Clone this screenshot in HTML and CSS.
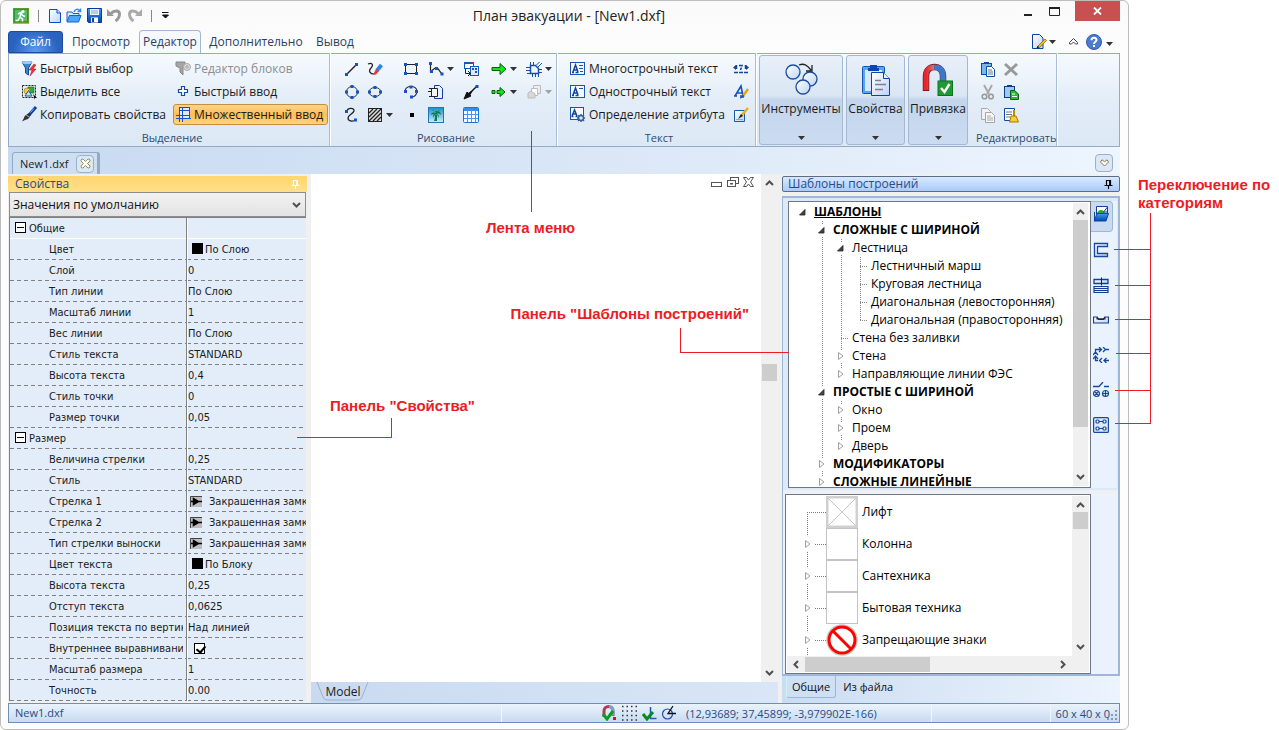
FILE: index.html
```html
<!DOCTYPE html>
<html lang="ru">
<head>
<meta charset="utf-8">
<title>План эвакуации - [New1.dxf]</title>
<link rel="stylesheet" href="styles.css">
</head>
<body>
<svg class="defs" aria-hidden="true">
  <defs>
    <linearGradient id="gBlue" x1="0" y1="0" x2="0" y2="1"><stop offset="0" stop-color="#3aa0f5"/><stop offset="1" stop-color="#0c3fa8"/></linearGradient>
    <linearGradient id="gPage" x1="0" y1="0" x2="1" y2="1"><stop offset="0" stop-color="#ffffff"/><stop offset="1" stop-color="#bcd3fa"/></linearGradient>
    <linearGradient id="gSky" x1="0" y1="0" x2="0" y2="1"><stop offset="0" stop-color="#1d8bd0"/><stop offset="1" stop-color="#c9f0fa"/></linearGradient>
    <linearGradient id="gRed" x1="0" y1="0" x2="1" y2="0"><stop offset="0" stop-color="#e8252b"/><stop offset="1" stop-color="#b8848a"/></linearGradient>
  </defs>
  <symbol id="caret" viewBox="0 0 7 4"><path d="M0 0h7L3.500 4z" fill="#333"/></symbol>
  <symbol id="up" viewBox="0 0 9 6"><path d="M1 5l3.500-3.500L8 5" fill="none" stroke="#505050" stroke-width="2"/></symbol>
  <symbol id="down" viewBox="0 0 9 6"><path d="M1 1l3.500 3.500L8 1" fill="none" stroke="#505050" stroke-width="2"/></symbol>
  <symbol id="left" viewBox="0 0 6 9"><path d="M5 1L1.500 4.500 5 8" fill="none" stroke="#505050" stroke-width="2"/></symbol>
  <symbol id="right" viewBox="0 0 6 9"><path d="M1 1l3.500 3.500L1 8" fill="none" stroke="#505050" stroke-width="2"/></symbol>
  <symbol id="open" viewBox="0 0 9 9"><path d="M7 2v5.500H1.500z" fill="#444" stroke="#222" stroke-width=".8"/></symbol>
  <symbol id="shut" viewBox="0 0 9 9"><path d="M2.500 1v7L7 4.500z" fill="#fff" stroke="#a0a0a0"/></symbol>
  <symbol id="pin" viewBox="0 0 9 9"><path d="M2.500 5V.5h4V5M.5 5.500h8M4.500 5.500V9M5.700 1v4" fill="none" stroke="currentColor" stroke-width="1.200"/></symbol>
  <symbol id="dart" viewBox="0 0 12 11"><path d="M0 0h12v11H0z" fill="#bdbdbd"/><path d="M.5 11V.5H12" fill="none" stroke="#444"/><path d="M1 5.500h11M3.500 2.500v6l5-3z" stroke="#000" stroke-width="1.500" fill="#000"/></symbol>
</svg>

<div class="stage">
<div class="window">
  <header class="titlebar">
    <div class="quick">
      <svg width="16" height="16" viewBox="0 0 16 16"><rect width="16" height="16" fill="#5f9b2a"/><rect x="1" y="1" width="14" height="13" fill="#1fa035"/><path d="M2 2h12v11H2z" fill="#fff" opacity=".25"/><circle cx="10" cy="3.500" r="1.500" fill="#fff"/><path d="M5 6l3-1.500 1.500 3L12 8.500M8 5L7 9l2.500 2v2.500M7 9l-2 3.500H2.500" stroke="#fff" stroke-width="1.500" fill="none"/><rect y="15" width="16" height="1" fill="#e0ad00"/></svg>
      <i class="bar"></i>
      <button aria-label="Создать"><svg width="12" height="14" viewBox="0 0 12 14"><path d="M.5.5h7.500l3.500 3.500v9.500H.5z" fill="url(#gPage)" stroke="#0a4fc0"/><path d="M8 .5V4h3.500" fill="#cfe2ff" stroke="#0a4fc0"/></svg></button>
      <button aria-label="Открыть"><svg width="16" height="15" viewBox="0 0 16 15"><path d="M1 13V4h5l1 1.500h6V8" fill="#d4e8ff" stroke="#0f62d0"/><path d="M1 13.500L3.500 7.500h11.500L12.500 14H1z" fill="#4ea4f7" stroke="#0f62d0"/><path d="M8 4c1-3 4-3.500 5.500-1.500M14.500.5V3.500h-3" fill="none" stroke="#2196f3" stroke-width="1.500"/></svg></button>
      <button aria-label="Сохранить"><svg width="15" height="15" viewBox="0 0 15 15"><path d="M.5.500h14v14h-13l-1-1z" fill="url(#gBlue)" stroke="#083a9c"/><rect x="3" y="1" width="9" height="6" fill="#eaf3ff"/><path d="M4 3h7M4 5h7" stroke="#8ab"/><rect x="4" y="9.500" width="7" height="5" fill="#fff"/><rect x="5" y="10" width="2" height="4" fill="#0b3fa0"/></svg></button>
      <button aria-label="Отменить"><svg width="15" height="13" viewBox="0 0 15 13"><path d="M0 0v7h7z" fill="#999"/><path d="M4 4.500C7 1 12.500 1 12.500 5c0 3-1 5-4 7" fill="none" stroke="#999" stroke-width="3"/></svg></button>
      <button aria-label="Вернуть"><svg width="15" height="13" viewBox="0 0 15 13"><path d="M15 0v7H8z" fill="#aaa"/><path d="M11 4.500C8 1 2.500 1 2.500 5c0 3 1 5 4 7" fill="none" stroke="#aaa" stroke-width="3"/></svg></button>
      <i class="bar"></i>
      <button aria-label="Настроить"><svg width="7" height="7" viewBox="0 0 7 7"><path d="M0 .5h6.500M.5 3h6L3.500 6z" stroke="#111" fill="#111"/></svg></button>
    </div>
    <h1>План эвакуации - [New1.dxf]</h1>
    <div class="sysbtns">
      <button aria-label="Свернуть"><svg width="10" height="10"><path d="M1 9h8" stroke="#222" stroke-width="2"/></svg></button>
      <button aria-label="Развернуть"><svg width="11" height="9"><path d="M.5 1v7.500h10V1" fill="none" stroke="#222"/><path d="M0 1h11" stroke="#222" stroke-width="2"/></svg></button>
      <button class="close" aria-label="Закрыть"><svg width="9" height="8" viewBox="0 0 9 8"><path d="M1 .5l7 7M8 .5l-7 7" stroke="#fff" stroke-width="1.800"/></svg></button>
    </div>
  </header>

  <nav class="tabs">
    <button class="file">Файл</button>
    <button class="t-view">Просмотр</button>
    <button class="active">Редактор</button>
    <button class="t-more">Дополнительно</button>
    <button class="t-out">Вывод</button>
    <div class="tabtools">
      <button aria-label="Стиль"><svg width="15" height="15" viewBox="0 0 15 15"><path d="M.5.500h7l3.500 3.500v10.500H.5z" fill="url(#gPage)" stroke="#0a3fa0"/><path d="M6 12l7-7 1.500 1.500-7 7z" fill="#f4c21c" stroke="#7a5a00" stroke-width=".7"/><path d="M4.500 14.200l1-2.400 1.800 1.700z" fill="#111"/></svg><svg class="caret"><use href="#caret"/></svg></button>
      <button aria-label="Свернуть ленту"><svg width="9" height="7" viewBox="0 0 9 7"><path d="M.5 4.500l4-4 4 4v1.500h-2l-2-2-2 2h-2z" fill="#fff" stroke="#444"/></svg></button>
      <button aria-label="Справка"><svg width="16" height="16" viewBox="0 0 16 16"><circle cx="8" cy="8" r="7.500" fill="#4a7bcc" stroke="#2f5ba8"/><path d="M5.500 6.200C5.500 3 10.500 3 10.500 6c0 1.800-2.500 1.800-2.500 4M8 11v2" fill="none" stroke="#fff" stroke-width="2"/></svg><svg class="caret low"><use href="#caret"/></svg></button>
    </div>
  </nav>

  <section class="ribbon">
    <div class="group select">
      <div class="cols">
        <div class="col wide">
          <button class="cmd"><svg width="17" height="17" viewBox="0 0 17 17"><path d="M1 2h10l-3.500 6v7l-3-2V8z" fill="#3a86cf" stroke="#14508f"/><ellipse cx="6" cy="2.500" rx="5" ry="1.500" fill="#9ccbf5"/><path d="M13 4L8 10h3l-2 6 6-7h-3l3-4z" fill="#f0303a" stroke="#a31a20" stroke-width=".5"/></svg>Быстрый выбор</button>
          <button class="cmd"><svg width="17" height="17" viewBox="0 0 17 17"><rect x="1.500" y="2.500" width="13" height="12" fill="none" stroke="#222" stroke-dasharray="2 1"/><rect x="7" y="4" width="6" height="6" fill="#2fae3a" stroke="#0c6a16" stroke-width=".6"/><circle cx="6" cy="8" r="3" fill="#f2d040" stroke="#927300" stroke-width=".6"/><path d="M7.500 7.500l3.500 5.500H4z" fill="#bfe0ff" stroke="#1558a8"/><path d="M12 11l4 4h-2l0 2z" fill="#000"/></svg>Выделить все</button>
          <button class="cmd"><svg width="17" height="17" viewBox="0 0 17 17"><path d="M15 1L8 9" stroke="#0f3f9c" stroke-width="3"/><path d="M13 2.500l-3.500 4" stroke="#7bb5f5"/><path d="M8 7l2 2-3 4-3 1-3 1.500L3 12c0-2 2-3 2-3z" fill="#333"/><path d="M5 9l4 2.500" stroke="#aaa"/></svg>Копировать свойства</button>
        </div>
        <div class="col">
          <button class="cmd off" disabled><svg width="17" height="17" viewBox="0 0 17 17"><path d="M1 2h9v5H8v8l-3-3V8L1 6z" fill="#a5a5a5" stroke="#888"/><circle cx="12" cy="7" r="3.500" fill="#ddd" stroke="#aaa"/><circle cx="12" cy="7" r="1.200" fill="#fff" stroke="#999"/></svg>Редактор блоков</button>
          <button class="cmd"><svg width="17" height="17" viewBox="0 0 17 17"><path d="M6.500 3.500h3v3h3v3h-3v3h-3v-3h-3v-3h3z" fill="#fff" stroke="#0b4fae" stroke-width="1.200"/></svg>Быстрый ввод</button>
          <button class="cmd on"><svg width="17" height="17" viewBox="0 0 17 17"><rect x="4" y="2" width="11" height="10" fill="#dfeaff"/><path d="M4.500 1v15M7.500 1v15M1 12.500h15M1 9.500h14M14.500 2v11M4 1.500h11M5 4.500h9" fill="none" stroke="#1553c8"/></svg>Множественный ввод</button>
        </div>
      </div>
      <h2>Выделение</h2>
    </div>

    <div class="group draw">
      <div class="tools">
        <button aria-label="Линия"><svg class="ic" viewBox="0 0 16 16"><path d="M3 13L13 3" stroke="#222" stroke-width="1.500"/><path d="M1 12h3v3H1zM11 2h3v3h-3z" fill="#1552c4"/></svg></button>
        <button aria-label="Эскиз"><svg class="ic" viewBox="0 0 16 16"><path d="M1 3c4-2 6 1 3 4s-1 6 3 6" fill="none" stroke="#222" stroke-width="1.200"/><path d="M14.500 4L10 9.500" stroke="#2a86e8" stroke-width="4"/><path d="M9 8l3 2-3 3.500-3 .5z" fill="#e83838"/></svg></button>
        <button aria-label="Прямоугольник"><svg class="ic" viewBox="0 0 16 16"><path d="M2.500 3.500h11v9h-11z" fill="#eef4fc" stroke="#222"/><path d="M1 2h3v3H1zM12 2h3v3h-3zM1 11h3v3H1zM12 11h3v3h-3z" fill="#1552c4"/></svg></button>
        <button aria-label="Полилиния"><svg class="ic" viewBox="0 0 16 16"><path d="M2.500 2.500v8l4-3c3-2 4 1 7 5" fill="none" stroke="#222" stroke-width="1.200"/><path d="M1 1h3v3H1zM2 9h3v3H2zM7 6h3v3H7zM12.500 11.500h3v3h-3z" fill="#1552c4"/></svg><svg class="caret"><use href="#caret"/></svg></button>
        <button aria-label="Блок"><svg class="ic" viewBox="0 0 16 16"><rect x="1.500" y="1.500" width="9" height="6" fill="#fff" stroke="#1558b8"/><path d="M1 2h10" stroke="#1558b8" stroke-width="2"/><path d="M9 1h2v2H9z" fill="#e02020"/><rect x="7.500" y="5.500" width="8" height="9" fill="#dceafc" stroke="#1558b8"/><path d="M9 7h2v2H9zM12 10h2v2h-2zM12 7h2v2h-2z" fill="#1552c4"/><path d="M2.500 8v4.500H7M5 10l2.500 2.500L5 15" fill="none" stroke="#222"/></svg></button>
        <button aria-label="Маршрут"><svg class="ic" viewBox="0 0 16 16"><path d="M1 6.500h8V2.500L15 8l-6 5.500V9.500H1z" fill="#13e61b" stroke="#0a5a0d"/></svg><svg class="caret"><use href="#caret"/></svg></button>
        <button aria-label="Область"><svg class="ic" viewBox="0 0 16 16"><path d="M4.500 4.500h5l3 3v5h-8z" fill="#f1f6ff" stroke="#1552a8" stroke-width="1.500"/><path d="M4.500 4V1M7.500 4V1M10.500 4l3-3M12 6l4-4M13 8.500h3M13 11.500h3M4 6.500H0M4 9.500H0M4 12.500H1M6.500 13v3M9.500 13v3M12.500 13v3" stroke="#1552a8"/></svg><svg class="caret"><use href="#caret"/></svg></button>

        <button aria-label="Окружность"><svg class="ic" viewBox="0 0 16 16"><circle cx="8" cy="8" r="5.500" fill="none" stroke="#333"/><path d="M6.500 1h3v3h-3zM6.500 12h3v3h-3zM1 6.500h3v3H1zM12 6.500h3v3h-3z" fill="#1552c4"/></svg></button>
        <button aria-label="Эллипс"><svg class="ic" viewBox="0 0 16 16"><ellipse cx="8" cy="8" rx="6" ry="4.500" fill="none" stroke="#333"/><path d="M6.500 2h3v3h-3zM6.500 11h3v3h-3zM1 6.500h3v3H1zM12 6.500h3v3h-3z" fill="#1552c4"/></svg></button>
        <button aria-label="Дуга"><svg class="ic" viewBox="0 0 16 16"><path d="M2 7c1-6 11-6 12 0 0 3-2 6-5 6" fill="none" stroke="#333" stroke-width="1.200"/><path d="M1 6h3v3H1zM6.500 1.500h3v3h-3zM12 6h3v3h-3zM7 11.500h3v3H7z" fill="#1552c4"/></svg></button>
        <button aria-label="Вставка"><svg class="ic" viewBox="0 0 16 16"><path d="M6.500 1.500h5l3 3v10h-8z" fill="#e5efff" stroke="#123f9c"/><path d="M3.500 4.500h6v8h-6z" fill="#f4f4f4" stroke="#222"/><path d="M1 4.500h8M0 7.500h4M1 12.500h8" stroke="#222"/></svg></button>
        <button aria-label="Выноска"><svg class="ic" viewBox="0 0 16 16"><path d="M14 2L5 11" stroke="#111" stroke-width="1.500"/><path d="M1 15l3-7 4 4z" fill="#111" stroke="#111"/><path d="M5 9l5-3-2.500 5z" fill="#111"/><path d="M12.500 1h3v3h-3z" fill="#1552c4"/></svg></button>
        <button aria-label="Запасной маршрут"><svg class="ic" viewBox="0 0 16 16"><path d="M1 6.500h3v3H1zM6 6.500h3V3.500L14 8l-5 4.500V9.500H6z" fill="#13e61b" stroke="#0a5a0d"/></svg><svg class="caret"><use href="#caret"/></svg></button>
        <button disabled aria-label="Порядок"><svg class="ic" viewBox="0 0 16 16"><path d="M7.500 1.500h7v8h-7z" fill="#eee" stroke="#bbb"/><path d="M5.500 4.500h6v7h-6z" fill="#fff" stroke="#bbb"/><path d="M2 14V9l3-2 4 3v4z" fill="#d8d8d8" stroke="#bbb"/></svg><svg class="caret dim"><use href="#caret"/></svg></button>

        <button aria-label="Сплайн"><svg class="ic" viewBox="0 0 16 16"><path d="M3 4c1-4 8-3 7 0S4 8 4 11s4 4 8 2" fill="none" stroke="#222" stroke-width="1.300"/><path d="M1 3h3v3H1zM10 11.500h3v3h-3z" fill="#1552c4"/></svg></button>
        <button aria-label="Штриховка"><svg class="ic" viewBox="0 0 16 16"><rect x="1.500" y="1.500" width="13" height="13" fill="#ddd" stroke="#222"/><path d="M2 6l4-4M2 10l8-8M2 14L14 2M6 14l8-8M10 14l4-4" stroke="#222" stroke-width="1.300"/></svg><svg class="caret"><use href="#caret"/></svg></button>
        <button aria-label="Точка"><svg class="ic" viewBox="0 0 16 16"><path d="M7 6h4v4H7z" fill="#000"/></svg></button>
        <button aria-label="Изображение"><svg class="ic" viewBox="0 0 16 16"><rect x=".5" y=".5" width="15" height="15" fill="url(#gSky)" stroke="#1c76b8"/><path d="M7 7c0 3 0 5-1 7h3V7M3 8c0-3 3-3 5-2 1-3 5-2 5 2-2-2-3-2-4-1 2 1 2 2 2 4C10 8 8 7 8 7S6 8 5 11c0-3 0-3 1-4-1 0-2 0-3 1zM4 4c2-1 3 0 4 2 1-3 3-3 4-2" fill="#0b7a4c"/></svg></button>
        <button aria-label="Таблица"><svg class="ic" viewBox="0 0 16 16"><rect x=".5" y=".5" width="15" height="15" rx="1" fill="#f8fcff" stroke="#1b6fd8"/><path d="M1 2.500h14" stroke="#3b8ae8" stroke-width="3"/><path d="M1 7.500h14M1 11.500h14M4.500 3v12M8.500 3v12M12.500 3v12" stroke="#4b94ea"/></svg></button>
      </div>
      <h2>Рисование</h2>
    </div>

    <div class="group text">
      <div class="cols">
        <div class="col">
          <button class="cmd"><svg width="15" height="14" viewBox="0 0 15 14"><rect x=".5" y=".5" width="14" height="12" fill="#f5f9ff" stroke="#1a55b0"/><path d="M2 10.500h2m1.500 0h3M3 10l2.500-7L8 10M4 8h3" fill="none" stroke="#12459c" stroke-width="1.500"/><path d="M9 3.500h4M9 6.500h4M10 9.500h3" stroke="#1a55b0"/></svg>Многострочный текст</button>
          <button class="cmd"><svg width="15" height="14" viewBox="0 0 15 14"><rect x=".5" y=".5" width="14" height="12" fill="#f5f9ff" stroke="#1a55b0"/><path d="M2 10.500h2m1.500 0h3M3 10l2.500-7L8 10M4 8h3" fill="none" stroke="#12459c" stroke-width="1.500"/><path d="M9 3.500h4" stroke="#1a55b0"/></svg>Однострочный текст</button>
          <button class="cmd"><svg width="15" height="15" viewBox="0 0 15 15"><rect x=".5" y=".5" width="13" height="12" fill="#f5f9ff" stroke="#1a55b0"/><path d="M2 9l2.500-6L7 9M3 7h3M1.500 9.500h2m2 0h2" fill="none" stroke="#12459c" stroke-width="1.500"/><circle cx="11" cy="11" r="2.500" fill="#d5e4fa" stroke="#3a5f96" stroke-width="1.500"/><path d="M11 7v1M11 14v1M7 11h1M14 11h1M8.300 8.300l.7.700M13 13l1 1M13 9l1-1M8 14l1-1" stroke="#3a5f96" stroke-width="1.500"/></svg>Определение атрибута</button>
        </div>
        <div class="col aside">
          <button aria-label="Размеры текста"><svg class="ic" viewBox="0 0 16 16"><path d="M0 6.500L3 4v5zM16 6.500L13 4v5z" fill="#12459c"/><path d="M3.500 4v5M6 4.500h3L7.500 9M12.500 4v5M1 11.500h14" fill="none" stroke="#12459c" stroke-width="1.500" stroke-dasharray="4 1"/></svg></button>
          <button aria-label="Стиль текста"><svg class="ic" viewBox="0 0 16 16"><path d="M1 12h3m3 0h4M2 12L8 2l2 10M4.500 9H10" fill="none" stroke="#1552b8" stroke-width="1.600"/><path d="M15 5l-5 7" stroke="#e9a414" stroke-width="2.500"/><path d="M10 11l-3 3 4-1z" fill="#1d5bc0" stroke="#1d5bc0"/></svg></button>
          <button aria-label="Правка текста"><svg class="ic" viewBox="0 0 16 16"><path d="M1.500 3.500h10v11h-10z" fill="url(#gPage)" stroke="#155aa8"/><path d="M3 12.500h7" stroke="#8ab"/><path d="M15 1L8 9" stroke="#eab020" stroke-width="2.500"/><path d="M8 7l2 2-5 3z" fill="#222"/></svg></button>
        </div>
      </div>
      <h2>Текст</h2>
    </div>

    <div class="bigs">
      <button class="big b1"><svg width="34" height="34" viewBox="0 0 34 34"><g fill="url(#gPage)" stroke="#1c4c9c" stroke-width="1.300"><circle cx="9" cy="9" r="7"/><circle cx="26" cy="16" r="7"/><circle cx="19" cy="24" r="7"/></g><path d="M15 2c5-2 8 0 12 5M28 2v6h-6" fill="none" stroke="#222" stroke-width="1.300"/></svg><span>Инструменты</span><svg class="caret"><use href="#caret"/></svg></button>
      <button class="big b2"><svg width="34" height="34" viewBox="0 0 34 34"><rect x="3.500" y="3.500" width="22" height="27" rx="1" fill="#58a6ee" stroke="#1156b4"/><path d="M6 7h17v21H6z" fill="#d7e9fc"/><path d="M9 5h2V2h7v3h2v3H9z" fill="#0a46ac"/><path d="M12.500 9.500h12l6 6v17h-18z" fill="url(#gPage)" stroke="#0b46a6"/><path d="M24.500 9.500v6h6" fill="#e6f0ff" stroke="#0b46a6"/><path d="M16 17.500h6M16 21.500h11M16 26.500h8" stroke="#7c8090" stroke-width="1.600"/></svg><span>Свойства</span><svg class="caret"><use href="#caret"/></svg></button>
      <button class="big b3"><svg width="34" height="34" viewBox="0 0 34 34"><path d="M5 28V13C5 1 22 1 22 13v6" fill="none" stroke="#8a1218" stroke-width="6.500"/><path d="M5 27V13C5 5 9 4.300 13.500 4.300" fill="none" stroke="url(#gRed)" stroke-width="5"/><path d="M13.500 4.300C18 4.300 22 6 22 13v7" fill="none" stroke="#3b78c8" stroke-width="5.500"/><rect x="17" y="18" width="14.500" height="14.500" fill="#1f9a30" stroke="#0c7420"/><path d="M20 25l3.500 4 5-8" fill="none" stroke="#fff" stroke-width="2.500"/></svg><span>Привязка</span><svg class="caret"><use href="#caret"/></svg></button>
    </div>

    <div class="group edit">
      <div class="clip">
        <button aria-label="Вставить"><svg class="ic" viewBox="0 0 16 16"><rect x="1.500" y="2.500" width="10" height="11" fill="#7ab6f0" stroke="#0b4ba8"/><path d="M4 3V1h5v2z" fill="#0b4ba8"/><path d="M6.500 5.500h5l3 3v7h-8z" fill="#fff" stroke="#0b4ba8"/><path d="M8 9h4M8 11h5M8 13h5" stroke="#678"/></svg></button>
        <button disabled aria-label="Удалить"><svg class="ic" viewBox="0 0 16 16"><path d="M2 3l12 11M14 3L2 14" stroke="#999" stroke-width="3"/></svg></button>
        <button disabled aria-label="Вырезать"><svg class="ic" viewBox="0 0 16 16"><path d="M4 1l5 9M12 1l-5 9" stroke="#aaa" stroke-width="2"/><circle cx="4.500" cy="12.500" r="2.300" fill="none" stroke="#999" stroke-width="1.600"/><circle cx="11" cy="12.500" r="2.300" fill="none" stroke="#999" stroke-width="1.600"/></svg></button>
        <button aria-label="Вставить блок"><svg class="ic" viewBox="0 0 16 16"><rect x="1.500" y="2.500" width="10" height="11" fill="#9ccaf5" stroke="#0b3c88"/><path d="M4 3V1h5v2z" fill="#0b3c88"/><path d="M7.500 6.500h4l4 3.500v5.500h-8z" fill="#32b53c" stroke="#0b6414"/><path d="M9 10h3M9 12.500h5" stroke="#fff"/></svg></button>
        <button disabled aria-label="Копировать"><svg class="ic" viewBox="0 0 16 16"><path d="M1.500 1.500h6l3 3v8h-9z" fill="#f2f2f2" stroke="#aaa"/><path d="M5.500 5.500h6l3 3v7h-9z" fill="#f7f7f7" stroke="#a5a5a5"/><path d="M7 9h4M7 11h6M7 13h6" stroke="#aaa"/></svg></button>
        <button aria-label="Очистить"><svg class="ic" viewBox="0 0 16 16"><path d="M1.500 1.500h10v12h-10z" fill="#fff" stroke="#0b4ba8"/><path d="M3 5h6M3 7.500h6M3 10h4" stroke="#678"/><path d="M11 3v6" stroke="#c08a00" stroke-width="2"/><path d="M8 9h5l2.500 6H6.500z" fill="#f6cf32" stroke="#a37a00"/></svg></button>
      </div>
      <h2>Редактировать</h2>
    </div>
  </section>

  <div class="docbar">
    <div class="doctab">New1.dxf<button aria-label="Закрыть вкладку"><svg width="11" height="11" viewBox="0 0 11 11"><path d="M1 2l1-1h1l2.500 2.500L8 1h1l1 1v1L7.500 5.500 10 8v1l-1 1H8L5.500 7.500 3 10H2L1 9V8l2.500-2.500L1 3z" fill="#fff" stroke="#8a8450" stroke-width=".9"/></svg></button></div>
    <button class="doclist" aria-label="Список документов"><svg width="9" height="8" viewBox="0 0 9 8"><path d="M.5 3L2 .8l2.500 2L7 .8 8.500 3l-4 4z" fill="#fff" stroke="#827b4a"/></svg></button>
  </div>

  <main class="body">
    <section class="props">
      <div class="phead gold"><span>Свойства</span><svg width="9" height="9"><use href="#pin"/></svg></div>
      <label class="combo"><select aria-label="Набор значений"><option>Значения по умолчанию</option></select><svg width="9" height="6"><use href="#down"/></svg></label>
      <table class="grid">
        <colgroup><col class="cname"><col></colgroup>
        <tbody>
        <tr class="cat first"><th><span class="minus"></span>Общие</th><td></td></tr>
        <tr><th>Цвет</th><td><i class="swatch"></i>По Слою</td></tr>
        <tr><th>Слой</th><td>0</td></tr>
        <tr><th>Тип линии</th><td>По Слою</td></tr>
        <tr><th>Масштаб линии</th><td>1</td></tr>
        <tr><th>Вес линии</th><td>По Слою</td></tr>
        <tr><th>Стиль текста</th><td>STANDARD</td></tr>
        <tr><th>Высота текста</th><td>0,4</td></tr>
        <tr><th>Стиль точки</th><td>0</td></tr>
        <tr><th>Размер точки</th><td>0,05</td></tr>
        <tr class="cat"><th><span class="minus"></span>Размер</th><td></td></tr>
        <tr><th>Величина стрелки</th><td>0,25</td></tr>
        <tr><th>Стиль</th><td>STANDARD</td></tr>
        <tr><th>Стрелка 1</th><td><svg class="dart"><use href="#dart"/></svg>Закрашенная замкнутая</td></tr>
        <tr><th>Стрелка 2</th><td><svg class="dart"><use href="#dart"/></svg>Закрашенная замкнутая</td></tr>
        <tr><th>Тип стрелки выноски</th><td><svg class="dart"><use href="#dart"/></svg>Закрашенная замкнутая</td></tr>
        <tr><th>Цвет текста</th><td><i class="swatch"></i>По Блоку</td></tr>
        <tr><th>Высота текста</th><td>0,25</td></tr>
        <tr><th>Отступ текста</th><td>0,0625</td></tr>
        <tr><th><span class="cut">Позиция текста по вертикали</span></th><td>Над линией</td></tr>
        <tr><th><label class="cut" for="inner">Внутреннее выравнивание</label></th><td><input id="inner" type="checkbox" checked></td></tr>
        <tr><th>Масштаб размера</th><td>1</td></tr>
        <tr><th>Точность</th><td>0.00</td></tr>
        </tbody>
      </table>
    </section>

    <section class="drawing">
      <div class="sheet">
        <div class="mdi">
          <button aria-label="Свернуть документ"><svg width="12" height="11" viewBox="0 0 12 11"><rect x=".5" y="5.500" width="10" height="4" fill="#fff" stroke="#555"/></svg></button>
          <button aria-label="Восстановить документ"><svg width="12" height="11" viewBox="0 0 12 11"><rect x="3.500" y=".5" width="8" height="6" fill="#fff" stroke="#555"/><rect x=".5" y="3.500" width="8" height="6" fill="#fff" stroke="#555"/><rect x="3" y="6" width="3" height="1.500" fill="#555"/></svg></button>
          <button aria-label="Закрыть документ"><svg width="11" height="10" viewBox="0 0 11 10"><path d="M.5.500h3l2 2.500 2-2.500h3L7.500 5l3 4.500h-3l-2-2.500-2 2.500h-3l3-4.500z" fill="#fff" stroke="#555"/></svg></button>
        </div>
        <div class="vscroll"><svg width="9" height="6"><use href="#up"/></svg><div class="track mid"><i></i></div><svg width="9" height="6"><use href="#down"/></svg></div>
      </div>
      <div class="sheets"><button><svg width="54" height="19" viewBox="0 0 54 19"><path d="M1 0l6 15q1 3 4 3h31q3 0 4-3l6-15" fill="none" stroke="#9cb0cc"/></svg><span>Model</span></button></div>
    </section>

    <aside class="templates">
      <div class="phead blue"><span>Шаблоны построений</span><svg width="9" height="9"><use href="#pin"/></svg></div>
      <div class="tframe">
        <div class="upper">
          <div class="treebox">
            <ul class="tree root">
              <li><div class="row"><svg><use href="#open"/></svg><b class="u">ШАБЛОНЫ</b></div>
                <ul>
                  <li><div class="row"><svg><use href="#open"/></svg><b>СЛОЖНЫЕ С ШИРИНОЙ</b></div>
                    <ul>
                      <li><div class="row"><svg><use href="#open"/></svg>Лестница</div>
                        <ul>
                          <li><div class="row leaf">Лестничный марш</div></li>
                          <li><div class="row leaf">Круговая лестница</div></li>
                          <li><div class="row leaf">Диагональная (левосторонняя)</div></li>
                          <li><div class="row leaf">Диагональная (правосторонняя)</div></li>
                        </ul></li>
                      <li><div class="row leaf">Стена без заливки</div></li>
                      <li><div class="row"><svg><use href="#shut"/></svg>Стена</div></li>
                      <li><div class="row"><svg><use href="#shut"/></svg>Направляющие линии ФЭС</div></li>
                    </ul></li>
                  <li><div class="row"><svg><use href="#open"/></svg><b>ПРОСТЫЕ С ШИРИНОЙ</b></div>
                    <ul>
                      <li><div class="row"><svg><use href="#shut"/></svg>Окно</div></li>
                      <li><div class="row"><svg><use href="#shut"/></svg>Проем</div></li>
                      <li><div class="row"><svg><use href="#shut"/></svg>Дверь</div></li>
                    </ul></li>
                  <li><div class="row"><svg><use href="#shut"/></svg><b>МОДИФИКАТОРЫ</b></div></li>
                  <li><div class="row"><svg><use href="#shut"/></svg><b>СЛОЖНЫЕ ЛИНЕЙНЫЕ</b></div></li>
                </ul></li>
            </ul>
            <div class="vscroll"><svg width="9" height="6"><use href="#up"/></svg><div class="track tall"><i></i></div><svg width="9" height="6"><use href="#down"/></svg></div>
          </div>
          <div class="cats">
            <button class="active" aria-label="Шаблоны"><svg class="ic" viewBox="0 0 16 16"><path d="M3.500.5h11v8h-11z" fill="#fff" stroke="#16409a"/><path d="M4 7c2-4 6-4 8 0z" fill="#22a63a"/><path d="M10.500 6l4-5v5z" fill="#d6e6ff" stroke="#16409a"/><path d="M1.500 15.500V6" stroke="#16409a"/><path d="M1.500 14.500L4 7.500h11.500L13 15H1.500z" fill="url(#gBlue)" stroke="#0d46a8"/></svg></button>
            <button aria-label="Сложные"><svg class="ic" viewBox="0 0 16 16"><path d="M1.500 1.500h13v3h-10v7h10v3h-13zM4.500 4.500v7" fill="url(#gPage)" stroke="#17489c" stroke-width="1.300"/></svg></button>
            <button aria-label="Простые"><svg class="ic" viewBox="0 0 16 16"><path d="M1 2.500h14v4H1z" fill="url(#gPage)" stroke="#123f94" stroke-width="1.300"/><path d="M8.500.500v8" stroke="#222"/><path d="M1 9.500h14v6H1zM1 11.500h14M1 13.500h14" fill="#e5efff" stroke="#123f94" stroke-width="1.200"/></svg></button>
            <button aria-label="Модификаторы"><svg class="ic" viewBox="0 0 16 16"><path d="M.5 5h3.500v2h8V5h3.500v6H.5z" fill="url(#gPage)" stroke="#123f94" stroke-width="1.200"/><path d="M4 4.500v2l1.500 1.500h5L12 6.500v-2l-2 2H6z" fill="#222"/></svg></button>
            <button aria-label="Линейные"><svg class="ic" viewBox="0 0 16 16"><path d="M2.500 7V2.500H8M6 0L8.500 2.500 6 5M10 0l2.500 2.500L10 5M12.500 2.500H16M2.500 10v3.500H5M0 8l2.500-3L5 8M0 12l2.500-3L5 12M16 13.500h-5M13.500 11L11 13.500l2.500 2.500M9 11l-2.500 2.500L9 16" fill="none" stroke="#17489c" stroke-width="1.300"/></svg></button>
            <button aria-label="Электрика"><svg class="ic" viewBox="0 0 16 16"><path d="M0 4.500h6L10 0M11 4.500h5" fill="none" stroke="#17489c" stroke-width="1.300"/><g fill="none" stroke="#17489c" stroke-width="1.200"><circle cx="3.500" cy="11.500" r="3"/><circle cx="12.500" cy="11.500" r="3"/><path d="M1.500 9.500l4 4M5.500 9.500l-4 4M12.500 8.500v6M9.500 11.500h6"/></g></svg></button>
            <button aria-label="Схемы"><svg class="ic" viewBox="0 0 16 16"><rect x=".6" y=".6" width="14.800" height="14.800" rx="1" fill="#dceaff" stroke="#17489c" stroke-width="1.200"/><g fill="#fff" stroke="#17489c" stroke-width="1.200"><path d="M4 4.500h8M4 11.500h8"/><rect x="3" y="3" width="3" height="3" rx="1"/><rect x="10" y="3" width="3" height="3" rx="1"/><rect x="3" y="10" width="3" height="3" rx="1"/><rect x="10" y="10" width="3" height="3" rx="1"/></g></svg></button>
          </div>
        </div>
        <div class="lower">
          <div class="listbox">
            <div class="listrow">
              <ul class="items">
                <li class="first"><span class="dots"></span><svg class="thumb" viewBox="0 0 32 32"><rect x="1" y="1" width="30" height="30" fill="#fff" stroke="#d0d0d0" stroke-width="3"/><path d="M2 2l28 28M30 2L2 30" stroke="#c4c4c4"/></svg>Лифт</li>
                <li><svg class="exp"><use href="#shut"/></svg><span class="dots"></span><i class="thumb empty"></i>Колонна</li>
                <li><svg class="exp"><use href="#shut"/></svg><span class="dots"></span><i class="thumb empty"></i>Сантехника</li>
                <li><svg class="exp"><use href="#shut"/></svg><span class="dots"></span><i class="thumb empty"></i>Бытовая техника</li>
                <li><svg class="exp"><use href="#shut"/></svg><span class="dots"></span><svg class="thumb" viewBox="0 0 32 32"><circle cx="16" cy="16" r="15" fill="#fff" stroke="#c9c9c9" stroke-width="1.500"/><circle cx="16" cy="16" r="13" fill="#fff" stroke="#ff0000" stroke-width="3"/><path d="M7 7l18 18" stroke="#ff0000" stroke-width="3"/></svg>Запрещающие знаки</li>
              </ul>
              <div class="vscroll"><svg width="9" height="6"><use href="#up"/></svg><div class="track short"><i></i></div><svg width="9" height="6"><use href="#down"/></svg></div>
            </div>
            <div class="hscroll"><svg width="6" height="9"><use href="#left"/></svg><div class="htrack"><i></i></div><svg width="6" height="9"><use href="#right"/></svg></div>
          </div>
        </div>
      </div>
      <div class="ptabs"><button class="active">Общие</button><button>Из файла</button></div>
    </aside>
  </main>

  <footer class="status">
    <span class="s-file">New1.dxf</span>
    <span class="s-pos">
      <button aria-label="Привязка"><svg class="si" viewBox="0 0 16 16"><path d="M3 12V6c0-6 9-6 9 0v5" fill="none" stroke="#b33a50" stroke-width="3"/><path d="M8 1.500c3 0 4 2 4 5v4" fill="none" stroke="#7d9fcc" stroke-width="3"/><path d="M2 9l4 5 6-8" fill="none" stroke="#119a22" stroke-width="3"/><path d="M12 12h3v3h-3z" fill="#e01010"/></svg></button>
      <button aria-label="Сетка"><svg class="si" viewBox="0 0 16 16"><path d="M1 1.500h15M1 6h15M1 10.500h15M1 15h15" stroke="#333" stroke-width="1.500" stroke-dasharray="1.500 3"/></svg></button>
      <button aria-label="Орто"><svg class="si" viewBox="0 0 16 16"><path d="M9.500 2v11.500h6" fill="none" stroke="#1d5bc0" stroke-width="1.500"/><path d="M2 9l4 5 6-7" fill="none" stroke="#0c8a1c" stroke-width="3"/></svg></button>
      <button aria-label="Полярное отслеживание"><svg class="si" viewBox="0 0 16 16"><circle cx="6.500" cy="9" r="5" fill="none" stroke="#1d4bb0" stroke-width="1.200"/><path d="M15 8.500H7L12 1" fill="none" stroke="#111" stroke-width="1.300"/></svg></button>
      <span class="coords">(12,93689; 37,45899; -3,979902E-166)</span>
    </span>
    <span class="s-gap"></span>
    <span class="s-size">60 x 40 x 0<svg width="11" height="11" viewBox="0 0 11 11"><path d="M8 0h2v2H8zM4 4h2v2H4zM8 4h2v2H8zM0 8h2v2H0zM4 8h2v2H4zM8 8h2v2H8z" fill="#7f9cc4"/></svg></span>
  </footer>
</div>

<p class="note n-menu">Лента меню</p><i class="line l-menu"></i>
<p class="note n-props">Панель "Свойства"</p><i class="line l-props"></i>
<p class="note n-tpl">Панель "Шаблоны построений"</p><i class="line l-tpl"></i>
<p class="note n-cats">Переключение по категориям</p>
<svg class="l-cats" width="42" height="212" viewBox="0 0 42 212"><path d="M36.500 0v211M0 36.500h36M1 72.500h35M1 106.500h35M2 140.500h34M1 177.500h35M1 210.500h35" fill="none" stroke="#ed1c24"/></svg>
</div>
</body>
</html>
```
FILE: styles.css
```css
* { box-sizing: border-box; }
body { margin: 0; background: #fff; color: #1b1b1b; font: 12px/18px "Open Sans", "Noto Sans", sans-serif; }
button { margin: 0; padding: 0; border: 0; background: none; font: inherit; color: inherit; display: flex; align-items: center; }
h1, h2, p, ul { margin: 0; padding: 0; font-weight: normal; }
ul { list-style: none; }
svg { display: block; flex: none; }
.defs { position: absolute; width: 0; height: 0; }
.caret { width: 7px; height: 4px; }
.caret.dim { opacity: .4; }
.ic { width: 16px; height: 16px; }

.stage { position: relative; padding-right: 150px; }
.window { display: flex; flex-direction: column; min-height: 100vh; padding: 0 8px 6px 7px; border: 1px solid #bdbdbd; border-radius: 6px; background: linear-gradient(#fafafa, #fdfdfd 60px); }

/* Title bar */
.titlebar { display: grid; grid-template-columns: 1fr auto 1fr; height: 29px; }
.quick { display: flex; align-items: center; gap: 5px; padding-left: 5px; }
.quick .bar { width: 1px; height: 12px; margin: 0 5px 0 4px; background: #888; }
.titlebar h1 { padding: 4px 0 0 10px; font-size: 14px; line-height: 22px; color: #222; }
.sysbtns { display: flex; justify-content: flex-end; }
.sysbtns button { justify-content: center; width: 27px; height: 20px; }
.sysbtns .close { width: 45px; background: #c75050; margin-left: 7px; }

/* Ribbon tabs */
.tabs { display: flex; align-items: flex-end; height: 23px; color: #2b3f63; }
.tabs > button { justify-content: center; height: 22px; }
.tabs .file { width: 55px; border: 1px solid #1c4a9c; border-radius: 3px 3px 0 0; background: radial-gradient(circle at 50% 100%, #5b9df0, #2a62bf 70%); color: #fff; }
.tabs .t-view { width: 76px; }
.tabs .active { width: 62px; height: 23px; border: 1px solid #a3b8d2; border-bottom: 0; border-radius: 4px 4px 0 0; background: #f5f9fe; }
.tabs .t-more { width: 110px; }
.tabs .t-out { width: 48px; }
.tabtools { display: flex; align-items: center; gap: 13px; margin-left: auto; padding-right: 7px; height: 23px; align-self: flex-start; }
.tabtools button { gap: 2px; }
.tabtools button:last-child { margin-left: -5px; gap: 4px; }
.caret.low { margin-top: 4px; }

/* Ribbon */
.ribbon { display: flex; height: 94px; border: 1px solid #92abc9; background: linear-gradient(#f6fafe, #e3edf8 50%, #dce8f5); }
.group { display: flex; flex-direction: column; flex: none; padding-top: 4px; border-right: 1px solid #a9bdd6; box-shadow: 1px 0 #fff; }
.group h2 { margin-top: auto; padding-left: 6px; text-align: center; font-size: 11px; line-height: 16px; color: #2f4a72; }
.select { width: 321px; }
.draw { width: 227px; }
.text { width: 199px; }
.cols { display: flex; padding: 0 1px 0 10px; }
.col { display: grid; grid-auto-rows: 23px; align-items: center; flex: 1; }
.col.wide { flex: none; width: 154px; }
.col.aside { flex: none; width: 18px; }
.cmd { gap: 2px; height: 21px; padding: 0 3px 0 2px; white-space: nowrap; }
.off { color: #8d8d8d; }
.cmd.on { border: 1px solid #c5903c; border-radius: 3px; background: linear-gradient(#fcd48a, #fdbf55 50%, #ffd47c); padding: 0 2px 0 1px; }
.tools { display: grid; grid-template-columns: 23px 36px 25px 35px 28px 35px 28px; grid-auto-rows: 23px; align-items: center; padding-left: 14px; }
.tools button { gap: 3px; }
.text .cols { padding: 0 4px 0 11px; }
.text .cmd { gap: 4px; }
.bigs { display: flex; gap: 3px; padding: 2px 0 0 3px; }
.big { flex-direction: column; height: 90px; padding: 7px 0 4px; border: 1px solid #a4b8d2; border-radius: 3px; background: linear-gradient(#e8f0f9, #dae6f4 45%, #c3d5ec 50%, #cbdcf1); white-space: nowrap; }
.big span { margin-top: 3px; }
.big .caret { margin-top: auto; }
.b1 { width: 84px; }
.b2 { width: 59px; }
.b3 { width: 60px; }
.edit { width: 89px; padding-left: 2px; }
.clip { display: grid; grid-template-columns: 23px 23px; grid-auto-rows: 23px; align-items: center; padding-left: 10px; }
.edit h2 { white-space: nowrap; }
.bigs, .group { margin-top: -1px; }

/* Document tabs */
.docbar { display: flex; align-items: flex-end; justify-content: space-between; height: 27px; padding: 0 7px 0 4px; background: linear-gradient(90deg, #c7daf1, #d9e6f6 50%, #edf5fe); }
.doctab { display: flex; align-items: center; gap: 8px; height: 22px; padding: 0 3px 0 7px; border: 1px solid #93a9c5; border-right-width: 3px; border-bottom: 0; border-radius: 3px 3px 0 0; background: #cfdff2; font-size: 11px; }
.doctab button, .doclist { justify-content: center; width: 18px; height: 18px; border: 1px solid #9bb0cb; border-radius: 4px; background: #dbe7f6; }
.doclist { margin-bottom: 2px; }

/* Work area */
.body { display: grid; grid-template-columns: 299px minmax(0, 1fr) 342px; flex: 1; background: #f0f0f0; }
.phead { display: flex; align-items: center; justify-content: space-between; height: 16px; padding: 0 7px; font-size: 12px; line-height: 14px; color: #2b4b86; }
.gold { background: linear-gradient(#ffd56e, #ffe08a); }
.gold svg { color: #fff; }
.blue { border: 1px solid #5e6c85; border-radius: 2px; padding: 0 6px 0 5px; background: linear-gradient(#d8e9ff, #a8cbfa); }
.blue svg { color: #000; }

.props { display: flex; flex-direction: column; padding-top: 2px; }
.combo { display: flex; align-items: center; height: 25px; margin: 0 1px; padding: 0 4px 0 3px; border: 1px solid #8c8c8c; background: linear-gradient(#f2f2f2, #e3e3e3); }
.combo select { flex: 1; min-width: 0; padding: 0; border: 0; background: none; appearance: none; font: inherit; color: #111; }
.grid { table-layout: fixed; width: 297px; margin-left: 1px; border-collapse: separate; border-spacing: 0; border-left: 1px solid #808080; border-top: 1px solid #808080; background: #e2edf9; font: 11px/18px "DejaVu Sans Condensed", "DejaVu Sans", sans-serif; }
.cname { width: 177px; }
.grid th, .grid td { height: 21px; padding: 0; overflow: hidden; white-space: nowrap; text-align: left; font-weight: normal; background: repeating-linear-gradient(90deg, #808080 0 4px, transparent 4px 7px) 0 100% / 100% 1px no-repeat; }
.grid th { padding-left: 39px; border-right: 1px solid #808080; }
.grid td { padding-left: 1px; box-shadow: inset 1px 0 #fff; }
.grid .cat th { padding-left: 5px; }
.grid .first th, .grid .first td { background: linear-gradient(#fff, #fff) 0 100% / 100% 1px no-repeat; }
.cut { display: block; margin-right: 3px; overflow: hidden; }
.minus { display: inline-block; width: 11px; height: 11px; margin-right: 3px; border: 1px solid #000; vertical-align: -1px; background: linear-gradient(#000, #000) 50% 50% / 7px 1px no-repeat #fff; }
.swatch { display: inline-block; width: 11px; height: 11px; margin: 0 2px 0 4px; background: #000; vertical-align: -1px; }
.dart { display: inline-block; width: 12px; height: 11px; margin: 0 7px 0 2px; vertical-align: -2px; }
.grid input { display: block; width: 11px; height: 11px; margin: 0 0 0 6px; border: 1px solid #000; background: #fff; appearance: none; }
.grid input:checked::before { content: ""; display: block; width: 4px; height: 7px; margin: 0 0 0 3px; border: solid #000; border-width: 0 2px 2px 0; transform: rotate(40deg); }

.drawing { display: flex; flex-direction: column; padding-left: 4px; }
.sheet { display: flex; justify-content: flex-end; flex: 1; background: #fff; }
.mdi { display: flex; align-items: flex-start; gap: 4px; padding: 3px 7px 0 0; }
.vscroll { display: flex; flex-direction: column; align-items: center; flex: none; width: 17px; padding: 6px 0; background: #f0f0f0; }
.track { display: flex; flex-direction: column; flex: 1; width: 15px; }
.track i { width: 100%; background: #cdcdcd; }
.mid { padding-top: 178px; }
.mid i { height: 17px; }
.tall { padding-top: 5px; }
.tall i { height: 207px; }
.short { padding-top: 4px; }
.short i { height: 17px; }
.sheets { display: flex; height: 21px; padding-left: 5px; background: linear-gradient(90deg, #c9daf0, #d9e6f7); }
.sheets button { display: grid; height: 19px; line-height: 16px; }
.sheets svg, .sheets span { grid-area: 1 / 1; }

.templates { display: flex; flex-direction: column; padding: 2px 0 0 4px; }
.tframe { display: flex; flex-direction: column; flex: 1; margin-top: 4px; border: 2px solid #9fb7d6; border-left-width: 1px; background: #eaf3fd; }
.upper { display: flex; flex: 1; padding: 3px 1px 2px 5px; background: #dce9f8; }
.treebox { display: flex; flex: 1; min-width: 0; padding: 1px 2px; overflow: hidden; contain: size; border: 1px solid #707784; background: #fff; color: #000; }
.treebox .vscroll { width: 15px; }
.root { flex: 1; padding: 0 0 0 12px; white-space: nowrap; }
.tree ul { margin-left: 19px; }
.tree li { background: repeating-linear-gradient(#888 0 1px, transparent 1px 2px) 0 0 / 1px 100% no-repeat; }
.tree li:last-child { background-size: 1px 9px; }
.root > li { background: none; }
.row { display: flex; align-items: center; height: 18px; }
.row svg { width: 9px; height: 12px; margin: 0 7px 0 -5px; background: #fff; }
.leaf::before { content: ""; width: 8px; height: 1px; margin-right: 3px; background: repeating-linear-gradient(90deg, #888 0 1px, transparent 1px 2px); }
.tree b { font-weight: 700; }
.u { text-decoration: underline; }
.cats { display: flex; flex-direction: column; gap: 19px; width: 26px; background: #eaf3fd; }
.cats button { justify-content: flex-start; height: 16px; padding-left: 2px; }
.cats .active { align-items: flex-start; height: 31px; width: 22px; margin-bottom: -9px; padding-top: 4px; border: 1px solid #9fb7d6; border-left: 0; border-radius: 0 4px 4px 0; background: #c9dbf1; }
.lower { display: flex; flex: none; height: 184px; border-top: 3px solid #f0f0f0; padding: 1px 27px 0 2px; }
.listbox { display: flex; flex-direction: column; flex: 1; padding: 1px; border: 1px solid #707784; background: #fff; color: #000; }
.listrow { display: flex; flex: 1; min-height: 0; }
.items { flex: 1; contain: size; overflow: hidden; padding-left: 20px; }
.items li { display: flex; align-items: center; height: 32px; background: repeating-linear-gradient(#777 0 1px, transparent 1px 2px) 0 0 / 1px 100% no-repeat; }
.items .first { background-position: 0 100%; background-size: 1px 16px; }
.exp { width: 9px; height: 16px; margin: 0 3px 0 -4px; background: #fff; }
.dots { width: 11px; height: 1px; background: repeating-linear-gradient(90deg, #777 0 1px, transparent 1px 2px); }
.first .dots { width: 19px; }
.thumb { width: 32px; height: 32px; margin-right: 4px; }
.empty { border: 1px solid #c4c4c4; background: #fff; }
.hscroll { display: flex; align-items: center; height: 16px; padding: 0 23px 0 6px; background: #f0f0f0; }
.htrack { flex: 1; padding-left: 6px; }
.htrack i { display: block; width: 125px; height: 15px; background: #cdcdcd; }
.ptabs { display: flex; height: 27px; padding-left: 4px; background: linear-gradient(90deg, #cbdcf2, #ecf4fd); color: #111; }
.ptabs button { height: 22px; padding: 0 7px; font-size: 11px; }
.ptabs .active { padding: 0 5px; border: 1px solid #9fb7d6; border-top: 0; border-left-color: #c9f4f8; border-radius: 0 0 3px 3px; background: #cfe0f4; }

/* Status bar */
.status { display: flex; height: 20px; border: 1px solid #6f8eb5; background: linear-gradient(#eaf3fc, #c8dbf1); color: #2b4a80; font-size: 11px; line-height: 17px; }
.status > span { border-right: 1px solid #eff6fd; }
.s-file { flex: none; width: 493px; padding-left: 6px; }
.s-pos { display: flex; align-items: center; gap: 4px; flex: none; width: 430px; padding-left: 99px; white-space: nowrap; }
.coords { margin-left: 5px; }
.si { width: 16px; height: 16px; }
.s-gap { flex: 1; }
.status .s-size { display: flex; align-items: center; padding: 0 1px 0 5px; border: 0; }
.s-size svg { margin: 4px 0 0 -3px; }

/* Callouts */
.note { position: absolute; color: #ed1c24; font: bold 15px/18px "Liberation Sans", Arial, sans-serif; white-space: nowrap; }
.line { position: absolute; border: 0 solid #ed1c24; }
.n-menu { left: 486px; top: 219px; }
.l-menu { left: 531px; top: 131px; height: 81px; border-left-width: 1px; }
.n-props { left: 330px; top: 397px; }
.l-props { left: 297px; top: 418px; width: 95px; height: 20px; border-width: 0 1px 1px 0; }
.n-tpl { right: 530px; top: 305px; }
.l-tpl { right: 490px; top: 328px; width: 109px; height: 25px; border-width: 0 0 1px 1px; }
.n-cats { right: 3px; top: 176px; width: 138px; white-space: normal; }
.l-cats { position: absolute; right: 123px; top: 213px; }
```
